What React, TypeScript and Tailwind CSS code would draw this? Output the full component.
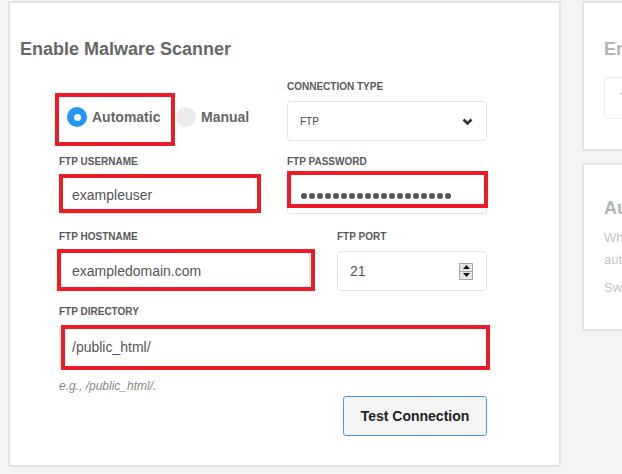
import React from "react";

const Mark = ({ className }: { className: string }) => (
  <div className={`pointer-events-none absolute border-4 border-[#ed1c24] ${className}`} />
);

const Label = ({ children }: { children: React.ReactNode }) => (
  <div className="h-3 text-[10px] leading-3 font-bold uppercase text-[#5a5a5a]">{children}</div>
);

export default function App() {
  return (
    <div className="flex h-[474px] w-[622px] gap-[21px] overflow-hidden bg-[#f3f4f6] pl-2 pt-px font-['Liberation_Sans',Arial,sans-serif]">
      {/* Scanner settings card */}
      <div className="h-[466px] w-[553px] shrink-0 rounded-[2px] border-2 border-[#e3e3e3] bg-white pl-[10px] pt-[34px]">
        <h2 className="text-[18px] font-bold leading-6 text-[#676767]">Enable Malware Scanner</h2>

        <div className="ml-[39px] mt-[20px] w-[428px]">
          {/* Mode + connection type */}
          <div className="flex">
            <div className="w-[228px] pt-4">
              <div className="flex h-10 items-center">
                <div className="relative flex h-10 w-[112px] items-center pl-2">
                  <span className="flex h-5 w-5 items-center justify-center rounded-full bg-[#2196f3]">
                    <span className="h-[7px] w-[7px] rounded-full bg-white" />
                  </span>
                  <span className="ml-[5px] text-[14px] font-bold text-[#666]">Automatic</span>
                  <Mark className="-left-1 -right-1 -top-1 -bottom-[9px]" />
                </div>
                <span className="ml-[5px] h-5 w-5 rounded-full bg-[#ececec]" />
                <span className="ml-[5px] text-[14px] font-bold text-[#666]">Manual</span>
              </div>
            </div>
            <div className="w-[200px]">
              <Label>Connection Type</Label>
              <div className="mt-2 flex h-10 items-center justify-between rounded-[4px] border border-[#e2e2e2] bg-white pl-3 pr-[13px]">
                <span className="text-[10px] text-[#444]">FTP</span>
                <svg width="11" height="8" viewBox="0 0 11 8" className="mt-px">
                  <polyline points="1.5,1.5 5.5,5.5 9.5,1.5" fill="none" stroke="#333" strokeWidth="2.6" />
                </svg>
              </div>
            </div>
          </div>

          {/* Credentials */}
          <div className="mt-[15px] flex gap-[28px]">
            <div className="w-[200px]">
              <Label>FTP Username</Label>
              <div className="relative mt-[6px] flex h-10 items-center rounded-[4px] border border-[#e2e2e2] px-3 pt-[3px] text-[14px] text-[#555]">
                exampleuser
                <Mark className="-left-px -right-[3px] -top-px -bottom-0" />
              </div>
            </div>
            <div className="w-[200px]">
              <Label>FTP Password</Label>
              <div className="relative mt-[6px] flex h-10 items-center gap-[2px] rounded-[4px] border border-[#e2e2e2] pl-[13px] pt-[4px]">
                {Array.from({ length: 19 }).map((_, i) => (
                  <span key={i} className="h-[6px] w-[6px] rounded-full bg-[#555]" />
                ))}
                <Mark className="-left-px -right-[2px] -top-1 bottom-[5px]" />
              </div>
            </div>
          </div>

          {/* Host + port */}
          <div className="mt-[17px] flex gap-[27px]">
            <div className="w-[251px]">
              <Label>FTP Hostname</Label>
              <div className="relative mt-2 flex h-10 items-center rounded-[4px] border border-[#e2e2e2] px-3 text-[14px] text-[#555]">
                exampledomain.com
                <Mark className="-left-[3px] -right-[6px] -top-[3px] -bottom-px" />
              </div>
            </div>
            <div className="w-[150px]">
              <Label>FTP Port</Label>
              <div className="mt-2 flex h-10 items-center justify-between rounded-[4px] border border-[#e2e2e2] pl-3 pr-[13px] text-[14px] text-[#555]">
                21
                <div className="flex h-[17px] w-[14px] flex-col border border-[#a8a8a8] bg-[#e6e6e6]">
                  <div className="flex flex-1 items-center justify-center border-b border-[#a8a8a8]">
                    <svg width="7" height="4" viewBox="0 0 7 4"><polygon points="0,4 3.5,0 7,4" fill="#111" /></svg>
                  </div>
                  <div className="flex flex-1 items-center justify-center">
                    <svg width="7" height="4" viewBox="0 0 7 4"><polygon points="0,0 3.5,4 7,0" fill="#111" /></svg>
                  </div>
                </div>
              </div>
            </div>
          </div>

          {/* Directory */}
          <div className="mt-[15px]">
            <Label>FTP Directory</Label>
            <div className="relative mt-[9px] flex h-10 items-center rounded-[4px] border border-[#e2e2e2] px-3 text-[14px] text-[#555]">
              /public_html/
              <Mark className="left-[1px] -right-[4px] -top-[3px] -bottom-[4px]" />
            </div>
          </div>

          <p className="mt-[11px] text-[12px] italic leading-4 text-[#888]">e.g., /public_html/.</p>

          <div className="mt-[2px] flex justify-end">
            <button className="h-10 w-[144px] rounded-[3px] border border-[#3d9bf0] bg-[#f4f4f4] text-[14px] font-bold text-[#222]">
              Test Connection
            </button>
          </div>
        </div>
      </div>

      {/* Side column */}
      <div className="flex w-[300px] shrink-0 flex-col gap-3">
        <div className="h-[150px] rounded-[2px] border-2 border-[#e3e3e3] bg-white pl-5 pt-[34px]">
          <h3 className="whitespace-nowrap text-[18px] font-bold leading-6 text-[#b3b3b3]">Enable Scheduled Scans</h3>
          <div className="mt-4 flex h-[42px] items-center rounded-[4px] border border-[#ececec] pl-[15px] text-[14px] text-[#c4c4c4]">
            Turn on
          </div>
        </div>
        <div className="h-[168px] rounded-[2px] border-2 border-[#e3e3e3] bg-white pl-5 pt-[31px]">
          <h3 className="whitespace-nowrap text-[18px] font-bold leading-6 text-[#b3b3b3]">Automatic Cleanup</h3>
          <p className="mt-[7px] whitespace-nowrap text-[13px] leading-[22px] text-[#c6c6c6]">
            When enabled, infected files are
            <br />
            automatically repaired or removed.
          </p>
          <p className="mt-[6px] whitespace-nowrap text-[13px] leading-[22px] text-[#c6c6c6]">Switch it off to review files first.</p>
        </div>
      </div>
    </div>
  );
}
